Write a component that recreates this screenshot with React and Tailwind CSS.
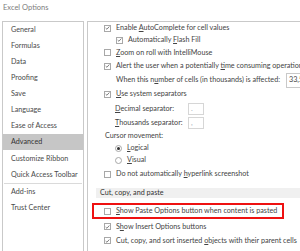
import React from "react";

const F = { fontFamily: "Lato, 'Open Sans', sans-serif" };

function Check({ checked }) {
  return (
    <span className="inline-flex w-[7px] h-[7px] border border-[#a8a8a8] bg-white items-center justify-center shrink-0">
      {checked && (
        <svg width="6" height="6" viewBox="0 0 6 6">
          <path d="M0.8 3.1 L2.3 4.5 L5.2 1.2" fill="none" stroke="#555" strokeWidth="0.9" />
        </svg>
      )}
    </span>
  );
}

function Radio({ on }) {
  return (
    <span className="inline-flex w-[7px] h-[7px] rounded-full border border-[#a8a8a8] bg-white items-center justify-center shrink-0">
      {on && <span className="w-[3px] h-[3px] rounded-full bg-[#333]" />}
    </span>
  );
}

const U = ({ children }) => <span className="underline underline-offset-1">{children}</span>;

function CRow({ h, indent, checked, children }) {
  return (
    <div className={`flex items-center ${h} ${indent}`}>
      <Check checked={checked} />
      <span className="ml-[5px] whitespace-nowrap">{children}</span>
    </div>
  );
}

export default function App() {
  const menu = [
    ["General", "h-[16px]"],
    ["Formulas", "h-[16px]"],
    ["Data", "h-[16px]"],
    ["Proofing", "h-[16px]"],
    ["Save", "h-[16px]"],
    ["Language", "h-[16px]"],
    ["Ease of Access", "h-[16px]"],
  ];
  return (
    <div className="w-[300px] h-[251px] overflow-hidden bg-white text-[#444] text-[7.2px] leading-none" style={F}>
      <div className="h-[21px] pl-[3px] pt-[4px] text-[#7d7d7d] text-[7.5px]">Excel Options</div>
      <div className="flex">
        <div className="ml-[2px] w-[82px] h-[240px] border border-[#c9c9c9] flex flex-col shrink-0 text-[#4a4a4a]">
          {menu.map(([t, h]) => (
            <div key={t} className={`${h} flex items-center pl-[8px]`}>{t}</div>
          ))}
          <div className="h-[16px] flex items-center pl-[8px] bg-[#c6c6c6] text-[#333]">Advanced</div>
          <div className="h-[17px] flex items-center pl-[8px]">Customize Ribbon</div>
          <div className="h-[16px] flex items-center pl-[8px]">Quick Access Toolbar</div>
          <div className="mx-[1px] h-px bg-[#dadada]" />
          <div className="h-[16px] flex items-center pl-[8px]">Add-ins</div>
          <div className="h-[15px] flex items-center pl-[8px]">Trust Center</div>
        </div>
        <div className="ml-[3px] w-[240px] h-[240px] border border-[#c9c9c9] flex flex-col shrink-0">
          <CRow h="h-[12px]" indent="pl-[16px]" checked>Enable <U>A</U>utoComplete for cell values</CRow>
          <CRow h="h-[12px]" indent="pl-[28px]" checked>Automatically <U>F</U>lash Fill</CRow>
          <CRow h="h-[13px]" indent="pl-[16px]"><U>Z</U>oom on roll with IntelliMouse</CRow>
          <CRow h="h-[14px]" indent="pl-[16px]" checked>Alert the user when a potentially <U>t</U>ime consuming operation takes</CRow>
          <div className="h-[14px] flex items-center pl-[28px] whitespace-nowrap">
            <span>When this n<U>u</U>mber of cells (in thousands) is affected:</span>
            <span className="ml-[6px] h-[15px] w-[30px] border border-[#c9c9c9] flex items-center pl-[2px] shrink-0">33,554</span>
          </div>
          <CRow h="h-[14px]" indent="pl-[16px]" checked><U>U</U>se system separators</CRow>
          <div className="h-[15px] flex items-center pl-[27px] whitespace-nowrap">
            <span className="w-[73px]"><U>D</U>ecimal separator:</span>
            <span className="h-[12px] w-[16px] border border-[#d6d6d6] flex items-center pl-[2px] text-[#9ab]">.</span>
          </div>
          <div className="h-[14px] flex items-center pl-[27px] whitespace-nowrap">
            <span className="w-[73px]"><U>T</U>housands separator:</span>
            <span className="h-[12px] w-[16px] border border-[#d6d6d6] flex items-center pl-[2px] text-[#9ab]">,</span>
          </div>
          <div className="h-[12px] flex items-center pl-[17px]">Cursor movement:</div>
          <div className="h-[12px] flex items-center pl-[27px]">
            <Radio on />
            <span className="ml-[5px]"><U>L</U>ogical</span>
          </div>
          <div className="h-[12px] flex items-center pl-[27px]">
            <Radio />
            <span className="ml-[5px]"><U>V</U>isual</span>
          </div>
          <CRow h="h-[16px]" indent="pl-[16px]">Do not automatically <U>h</U>yperlink screenshot</CRow>
          <div className="h-[6px]" />
          <div className="h-[10px] ml-[8px] bg-[#f0f0f0] flex items-center pl-[4px] text-[#333]">Cut, copy, and paste</div>
          <div className="h-[5px]" />
          <div className="h-[16px] ml-[4px] w-[192px] border-2 border-[#ee1111] flex items-center pl-[10px]">
            <Check />
            <span className="ml-[5px] whitespace-nowrap"><U>S</U>how Paste Options button when content is pasted</span>
          </div>
          <CRow h="h-[15px]" indent="pl-[16px]" checked>S<U>h</U>ow Insert Options buttons</CRow>
          <CRow h="h-[13px]" indent="pl-[16px]" checked>Cut, copy, and sort inserted <U>o</U>bjects with their parent cells</CRow>
        </div>
      </div>
    </div>
  );
}
